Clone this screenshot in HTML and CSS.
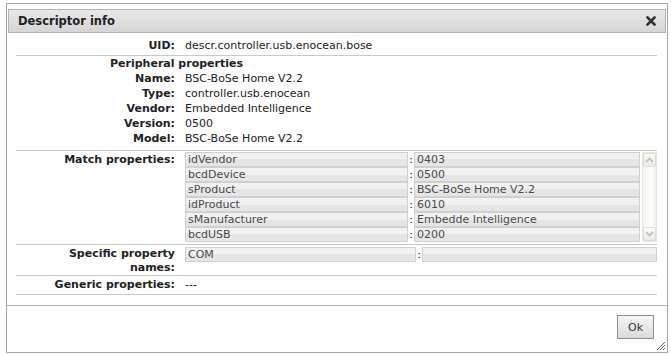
FILE: index.html
```html
<!DOCTYPE html>
<html lang="en">
<head>
    <meta charset="UTF-8">
    <title>Descriptor info</title>
    <link rel="stylesheet" href="styles.css">
</head>
<body>
<div class="page">
    <div class="dialog">
        <div class="title-bar">
            <span class="title">Descriptor info</span>
            <svg class="close-icon" width="10" height="10" viewBox="0 0 10 10">
                <path d="M1.5 1.5 L8.5 8.5 M8.5 1.5 L1.5 8.5" stroke="#333" stroke-width="2.6" stroke-linecap="square"/>
            </svg>
        </div>

        <div class="content">
            <div class="row row-uid">
                <div class="label">UID:</div>
                <div class="value">descr.controller.usb.enocean.bose</div>
            </div>

            <div class="group">
                <div class="group-title">Peripheral properties</div>
                <div class="line">
                    <div class="label">Name:</div>
                    <div class="value">BSC-BoSe Home V2.2</div>
                </div>
                <div class="line">
                    <div class="label">Type:</div>
                    <div class="value">controller.usb.enocean</div>
                </div>
                <div class="line">
                    <div class="label">Vendor:</div>
                    <div class="value">Embedded Intelligence</div>
                </div>
                <div class="line">
                    <div class="label">Version:</div>
                    <div class="value">0500</div>
                </div>
                <div class="line">
                    <div class="label">Model:</div>
                    <div class="value">BSC-BoSe Home V2.2</div>
                </div>
            </div>

            <div class="row row-match">
                <div class="label">Match properties:</div>
                <div class="kv-list">
                    <div class="kv-rows">
                        <div class="cell">idVendor</div><div class="colon">:</div><div class="cell">0403</div>
                        <div class="cell">bcdDevice</div><div class="colon">:</div><div class="cell">0500</div>
                        <div class="cell">sProduct</div><div class="colon">:</div><div class="cell">BSC-BoSe Home V2.2</div>
                        <div class="cell">idProduct</div><div class="colon">:</div><div class="cell">6010</div>
                        <div class="cell">sManufacturer</div><div class="colon">:</div><div class="cell">Embedde Intelligence</div>
                        <div class="cell">bcdUSB</div><div class="colon">:</div><div class="cell">0200</div>
                    </div>
                    <div class="scroll">
                        <div class="scroll-btn">
                            <svg width="9" height="6" viewBox="0 0 9 6"><path d="M1 5 L4.5 1.5 L8 5" fill="none" stroke="#c4c4bc" stroke-width="1.8"/></svg>
                        </div>
                        <div class="scroll-btn">
                            <svg width="9" height="6" viewBox="0 0 9 6"><path d="M1 1 L4.5 4.5 L8 1" fill="none" stroke="#c4c4bc" stroke-width="1.8"/></svg>
                        </div>
                    </div>
                </div>
            </div>

            <div class="row row-specific">
                <div class="label label-wrap">Specific property<br>names:</div>
                <div class="kv-rows kv-wide">
                    <div class="cell">COM</div><div class="colon">:</div><div class="cell"></div>
                </div>
            </div>

            <div class="row row-generic">
                <div class="label">Generic properties:</div>
                <div class="value">---</div>
            </div>
        </div>

        <div class="footer">
            <button class="ok-button">Ok</button>
        </div>

        <svg class="grip" width="11" height="11" viewBox="0 0 11 11">
            <path d="M10 2 L2 10 M10 5 L5 10 M10 8 L8 10" stroke="#666" stroke-width="1"/>
        </svg>
    </div>
</div>
</body>
</html>
```

FILE: styles.css
```css
html, body {
    margin: 0;
    background-color: white;
    font-family: "DejaVu Sans", Verdana, sans-serif;
    font-size: 11px;
    color: #222;
}

.page {
    padding: 3px 0 0 6px;
}

.dialog {
    position: relative;
    width: 662px;
    height: 350px;
    box-sizing: border-box;
    border: 1px solid #a6a6a6;
    display: flex;
    flex-direction: column;
}

/*标题栏*/
.title-bar {
    margin: 5px 1px 0;
    height: 24px;
    box-sizing: border-box;
    border: 1px solid #b3b3b3;
    background: linear-gradient(#e8e8e8, #d5d5d5);
    display: flex;
    align-items: center;
    justify-content: space-between;
    padding: 0 9px 0 9px;
}

.title {
    font-weight: bold;
    font-size: 11.5px;
    color: #222;
}

/*内容*/
.content {
    padding: 0 10px 10px 9px;
}

.row, .line {
    display: grid;
    grid-template-columns: 159px 1fr;
    column-gap: 10px;
    line-height: 15px;
}

.row {
    border-bottom: 1px solid #c9c9c9;
}

.label {
    text-align: right;
    font-weight: bold;
    font-size: 11px;
    white-space: nowrap;
}

.value {
    white-space: nowrap;
}

.row-uid {
    padding: 5px 0 2px;
}

.group {
    border-bottom: 1px solid #c9c9c9;
    padding-bottom: 4px;
    line-height: 15px;
}

.group-title {
    padding-left: 94px;
    font-weight: bold;
    font-size: 11px;
}

.row-match {
    padding: 1px 0 2px;
}

.row-specific {
    padding: 2px 0 0;
}

.label-wrap {
    line-height: 14px;
}

.row-generic {
    padding: 1px 0 2px;
}

/*属性列表*/
.kv-list {
    display: flex;
    gap: 2px;
}

.kv-rows {
    flex: 1;
    display: grid;
    grid-template-columns: 223px 6px 1fr;
    align-content: start;
}

.kv-wide {
    grid-template-columns: 231px 6px 1fr;
}

.cell {
    height: 15px;
    box-sizing: border-box;
    border: 1px solid #d0d0d0;
    background: linear-gradient(#f1f1f1 0, #f1f1f1 50%, #e5e5e5 50%, #e5e5e5 100%);
    padding: 0 2px;
    line-height: 13px;
    color: #4a4a4a;
    white-space: nowrap;
    overflow: hidden;
}

.colon {
    text-align: center;
    line-height: 15px;
    color: #111;
}

.scroll {
    width: 15px;
    height: 90px;
    box-sizing: border-box;
    border: 1px solid #e6e6df;
    background: linear-gradient(to right, #f4f4ee, #fdfdfb 60%, #f0f0ea);
    display: flex;
    flex-direction: column;
    justify-content: space-between;
}

.scroll-btn {
    height: 14px;
    box-sizing: border-box;
    border: 1px solid #dcdcd4;
    border-radius: 2px;
    background: linear-gradient(#fbfbf8, #ecece6);
    display: flex;
    align-items: center;
    justify-content: center;
}

/*底部*/
.footer {
    flex: 1;
    border-top: 1px solid #b5b5b5;
    display: flex;
    justify-content: flex-end;
    align-items: flex-start;
    padding: 9px 13px 0 0;
}

.ok-button {
    width: 37px;
    height: 24px;
    border: 1px solid #8e8e8e;
    background: linear-gradient(#f6f6f6, #dadada);
    font-family: "DejaVu Sans", Verdana, sans-serif;
    font-size: 11px;
    color: #333;
    padding: 0;
}

.grip {
    position: absolute;
    right: 1px;
    bottom: 1px;
}
```
